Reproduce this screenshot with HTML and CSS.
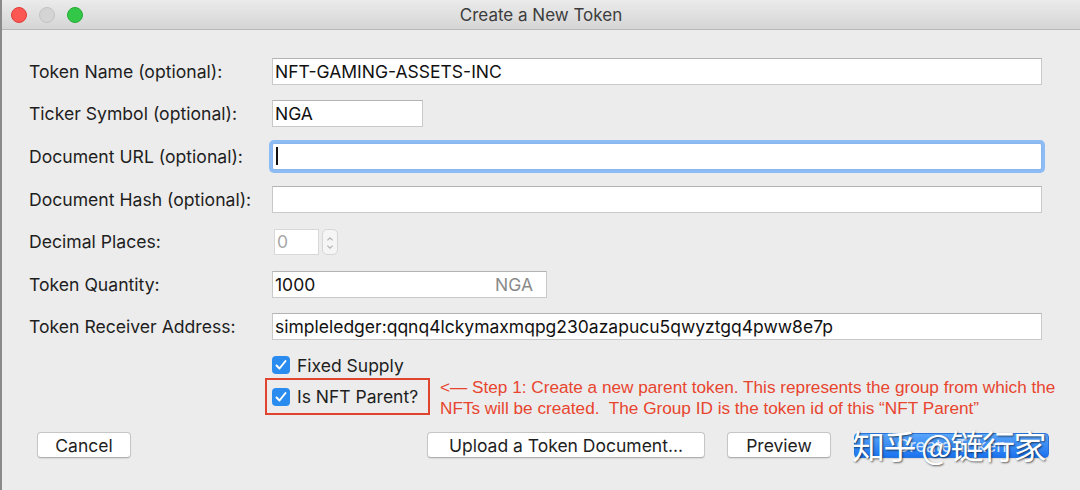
FILE: index.html
```html
<!DOCTYPE html>
<html>
<head>
<meta charset="utf-8">
<link rel="stylesheet" href="styles.css">
</head>
<body>
<div class="window">
  <div class="titlebar">
    <div class="lights">
      <span class="light red"></span>
      <span class="light gray"></span>
      <span class="light green"></span>
    </div>
    <div class="title">Create a New Token</div>
  </div>
  <div class="content">
    <div class="form">
      <label class="lbl">Token Name (optional):</label>
      <div class="field"><div class="input wide">NFT-GAMING-ASSETS-INC</div></div>

      <label class="lbl">Ticker Symbol (optional):</label>
      <div class="field"><div class="input ticker">NGA</div></div>

      <label class="lbl">Document URL (optional):</label>
      <div class="field"><div class="input wide focus"><span class="caret"></span></div></div>

      <label class="lbl">Document Hash (optional):</label>
      <div class="field"><div class="input wide"></div></div>

      <label class="lbl">Decimal Places:</label>
      <div class="field">
        <div class="input decimal disabled">0</div>
        <div class="stepper">
          <svg width="16" height="26" viewBox="0 0 16 26"><path d="M5 10 L8 7 L11 10" fill="none" stroke="#b0b0b0" stroke-width="1.3"/><path d="M5 16 L8 19 L11 16" fill="none" stroke="#b0b0b0" stroke-width="1.3"/></svg>
        </div>
      </div>

      <label class="lbl">Token Quantity:</label>
      <div class="field"><div class="input qty"><span>1000</span><span class="unit">NGA</span></div></div>

      <label class="lbl">Token Receiver Address:</label>
      <div class="field"><div class="input wide">simpleledger:qqnq4lckymaxmqpg230azapucu5qwyztgq4pww8e7p</div></div>
    </div>

    <div class="checks">
      <div class="check-row">
        <span class="cb"><svg width="18" height="18" viewBox="0 0 18 18"><path d="M4.5 9.5 L7.5 12.5 L13.5 5" fill="none" stroke="#fff" stroke-width="2" stroke-linecap="round" stroke-linejoin="round"/></svg></span>
        <span class="cb-text">Fixed Supply</span>
      </div>
      <div class="check-row second">
        <div class="highlight">
          <span class="cb"><svg width="18" height="18" viewBox="0 0 18 18"><path d="M4.5 9.5 L7.5 12.5 L13.5 5" fill="none" stroke="#fff" stroke-width="2" stroke-linecap="round" stroke-linejoin="round"/></svg></span>
          <span class="cb-text">Is NFT Parent?</span>
        </div>
        <div class="note">&lt;— Step 1: Create a new parent token. This represents the group from which the<br>NFTs will be created.&nbsp; The Group ID is the token id of this “NFT Parent”</div>
      </div>
    </div>

    <div class="buttons">
      <button class="btn cancel">Cancel</button>
      <div class="right-btns">
        <button class="btn upload">Upload a Token Document...</button>
        <button class="btn preview">Preview</button>
        <div class="primary-wrap">
          <button class="btn primary">Create Token</button>
          <span class="watermark">知乎 @链行家</span>
        </div>
      </div>
    </div>
  </div>
</div>
</body>
</html>
```

FILE: styles.css
```css
* { box-sizing: border-box; }
html, body { margin: 0; padding: 0; }
body {
  width: 1080px;
  height: 490px;
  overflow: hidden;
  background: #ececec;
  font-family: "Inter", "Liberation Sans", Arial, sans-serif;
  color: #1f1f1f;
}
.window {
  width: 1080px;
  height: 490px;
  background: #ececec;
  border-left: 2px solid #8a8a8a;
  display: flex;
  flex-direction: column;
}
.titlebar {
  height: 30px;
  flex: none;
  background: linear-gradient(#ebebeb, #d5d5d5);
  border-bottom: 1px solid #b8b8b8;
  display: flex;
  align-items: center;
  position: relative;
}
.lights {
  display: flex;
  gap: 12px;
  padding-left: 9px;
}
.light {
  width: 16px;
  height: 16px;
  border-radius: 50%;
  display: block;
}
.light.red { background: #fc5753; border: 1px solid #df3d38; }
.light.gray { background: #d4d4d4; border: 1px solid #c3c3c3; }
.light.green { background: #33c748; border: 1px solid #27aa35; }
.title {
  position: absolute;
  left: 0; right: 0; top: 0;
  line-height: 30px;
  text-align: center;
  font-size: 17px;
  color: #3c3c3c;
}
.content {
  padding: 20px 0 0 27px;
}
.form {
  display: grid;
  grid-template-columns: 243px 1fr;
  grid-auto-rows: 42.6px;
  align-items: center;
}
.lbl {
  font-size: 17.6px;
  color: #1e1e1e;
}
.field {
  display: flex;
  align-items: center;
  gap: 3px;
}
.input {
  height: 27px;
  background: #fff;
  border: 1px solid #c9c9c9;
  border-top-color: #b3b3b3;
  font-size: 17.5px;
  line-height: 25px;
  padding-left: 2px;
  color: #111;
  white-space: nowrap;
  display: flex;
  align-items: center;
}
.input.wide { width: 770px; }
.input.ticker { width: 151px; }
.input.focus {
  border: 1px solid #8ab4ec;
  box-shadow: 0 0 0 3px #8dbcf5;
  border-radius: 2px;
}
.caret {
  display: block;
  width: 1.5px;
  height: 18px;
  background: #111;
  margin-left: 1px;
}
.input.decimal {
  width: 45px;
  margin-left: 2px;
  height: 26px;
  border-color: #d8d8d8;
  color: #a8a8a8;
}
.stepper {
  width: 16px;
  height: 26px;
  border: 1px solid #d6d6d6;
  border-radius: 5px;
  background: #f5f5f5;
  display: flex;
}
.input.qty {
  width: 275px;
  justify-content: space-between;
  padding-right: 13px;
}
.unit { color: #8a8a8a; }
.checks {
  padding-left: 243px;
  padding-top: 5px;
  display: flex;
  flex-direction: column;
}
.check-row {
  display: flex;
  align-items: center;
  height: 24px;
}
.cb {
  width: 18px;
  height: 18px;
  border-radius: 4px;
  background: #2b8cf0;
  display: block;
  flex: none;
}
.cb-text {
  font-size: 17.5px;
  margin-left: 7px;
  color: #1e1e1e;
}
.check-row.second {
  margin-left: -7px;
  margin-top: 1px;
  height: 37px;
}
.highlight {
  display: flex;
  align-items: center;
  border: 2px solid #e0442f;
  height: 37px;
  width: 165px;
  padding-left: 5px;
  flex: none;
}
.note {
  margin-left: 10px;
  padding-top: 3px;
  font-family: "Liberation Sans", Arial, sans-serif;
  font-size: 17.2px;
  line-height: 21px;
  color: #e8452f;
  white-space: nowrap;
}
.buttons {
  display: flex;
  align-items: center;
  margin-top: 17px;
  padding-left: 8px;
}
.btn {
  font-family: inherit;
  font-size: 17.5px;
  height: 26px;
  background: #fff;
  border: 1px solid #c6c6c6;
  border-bottom-color: #b0b0b0;
  border-radius: 4px;
  color: #1e1e1e;
  padding: 0;
  box-shadow: 0 1px 1px rgba(0,0,0,0.08);
}
.cancel { width: 94px; }
.right-btns {
  margin-left: 296px;
  display: flex;
  align-items: center;
  gap: 22px;
}
.upload { width: 278px; }
.preview { width: 104px; }
.primary-wrap {
  position: relative;
  margin-left: 1px;
}
.primary {
  width: 195px;
  height: 25px;
  background: linear-gradient(#5aa6fb, #1a72ef);
  border-color: #2a74d9;
  color: #cfe3ff;
}
.watermark {
  position: absolute;
  left: -2px;
  top: -10px;
  font-family: "Noto Sans CJK SC", sans-serif;
  font-size: 33px;
  line-height: 44px;
  color: #fff;
  white-space: nowrap;
  text-shadow: 1px 1px 2px rgba(0,0,0,0.6);
  letter-spacing: -1.5px;
}
```
